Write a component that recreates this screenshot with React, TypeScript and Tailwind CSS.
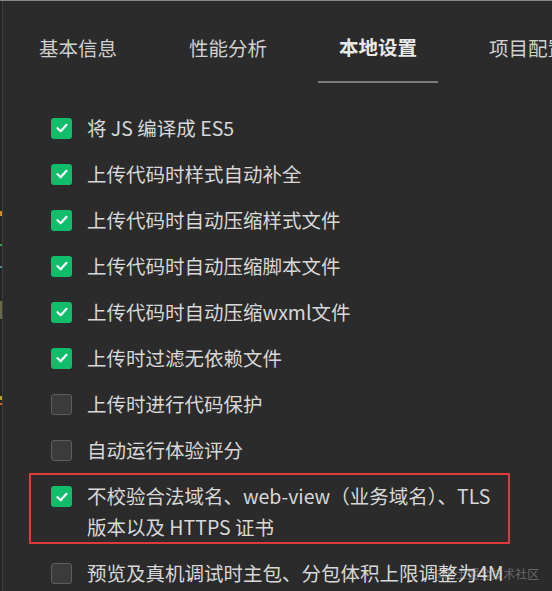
import React from "react";

const items: { label: string; checked: boolean }[] = [
  { label: "将 JS 编译成 ES5", checked: true },
  { label: "上传代码时样式自动补全", checked: true },
  { label: "上传代码时自动压缩样式文件", checked: true },
  { label: "上传代码时自动压缩脚本文件", checked: true },
  { label: "上传代码时自动压缩wxml文件", checked: true },
  { label: "上传时过滤无依赖文件", checked: true },
  { label: "上传时进行代码保护", checked: false },
  { label: "自动运行体验评分", checked: false },
];

function Box({ checked }: { checked: boolean }) {
  if (checked) {
    return (
      <div className="w-[21px] h-[21px] shrink-0 rounded-[3px] bg-[#0fbd6b] flex items-center justify-center">
        <svg width="14" height="14" viewBox="0 0 14 14" fill="none">
          <path d="M2.5 7.2 L5.7 10.3 L11.5 3.8" stroke="#ffffff" strokeWidth="2.2" strokeLinecap="round" strokeLinejoin="round" />
        </svg>
      </div>
    );
  }
  return <div className="w-[21px] h-[21px] shrink-0 rounded-[3px] bg-[#3b3b3b] border border-[#5e5e5e]" />;
}

export default function App() {
  const font = { fontFamily: '"Noto Sans CJK SC", "Microsoft YaHei", sans-serif' };
  return (
    <div className="w-[552px] h-[591px] bg-[#2b2b2b] flex overflow-hidden relative border-t border-[#8a8a8a]" style={font}>
      <div className="w-[3px] h-full bg-[#242424] border-r border-[#3d3d3d] relative shrink-0">
        <div className="absolute left-0 top-[210px] w-[2px] h-[5px] bg-[#c8932f]" />
        <div className="absolute left-0 top-[243px] w-[2px] h-[2px] bg-[#3f9a55]" />
        <div className="absolute left-0 top-[265px] w-[2px] h-[2px] bg-[#5a8a9a]" />
        <div className="absolute left-0 top-[300px] w-[2px] h-[18px] bg-[#6a6a4a]" />
        <div className="absolute left-0 top-[395px] w-[2px] h-[4px] bg-[#b8a030]" />
        <div className="absolute left-0 top-[402px] w-[2px] h-[2px] bg-[#d07030]" />
      </div>
      <div className="flex-1 flex flex-col">
        <div className="flex pl-[15px] pt-[11px] gap-[30px] text-[19.5px] whitespace-nowrap">
          <div className="h-[71px] px-[21px] flex items-center text-[#d0d0d0]">基本信息</div>
          <div className="h-[71px] px-[21px] flex items-center text-[#d0d0d0]">性能分析</div>
          <div className="h-[71px] px-[21px] flex items-center text-[#e8e8e8] font-bold border-b-2 border-[#7e7e7e]">本地设置</div>
          <div className="h-[71px] px-[21px] flex items-center text-[#d0d0d0]">项目配置</div>
        </div>
        <div className="ml-[26px] w-[481px] pt-[22px] text-[19.5px] text-[#d8d8d8]">
          {items.map((it) => (
            <div key={it.label} className="h-[46px] pl-[22px] flex items-center gap-[15px] whitespace-nowrap">
              <Box checked={it.checked} />
              <span>{it.label}</span>
            </div>
          ))}
          <div className="border-2 border-[#e0393b] pl-[20px] pr-[4px] pt-[5px] pb-[0px] flex items-start gap-[15px] leading-[31px]">
            <div className="mt-[6px]">
              <Box checked={true} />
            </div>
            <span>不校验合法域名、web-view（业务域名）、TLS 版本以及 HTTPS 证书</span>
          </div>
          <div className="h-[46px] mt-[6px] pl-[22px] flex items-center gap-[15px] whitespace-nowrap">
            <Box checked={false} />
            <span>预览及真机调试时主包、分包体积上限调整为4M</span>
          </div>
        </div>
      </div>
      <div className="absolute left-[432px] top-[564px] text-[12px] leading-[18px] text-[#ffffff]/30 whitespace-nowrap">@稀土掘金技术社区</div>
    </div>
  );
}
